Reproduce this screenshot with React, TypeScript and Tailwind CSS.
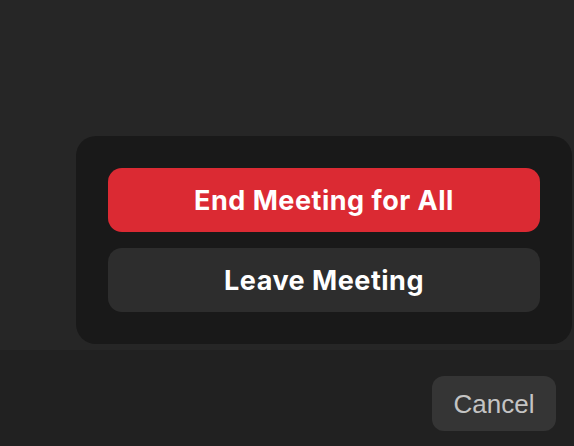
export default function App() {
  return (
    <div className="w-[574px] h-[446px] flex flex-col bg-[#212121]" style={{ fontFamily: "Inter, 'Liberation Sans', sans-serif" }}>
      <div className="h-[350px] bg-[#262626] flex justify-end items-end pr-[2px] pb-[6px]">
        <div className="w-[496px] rounded-[20px] bg-[#191919] p-8 flex flex-col gap-4">
          <button className="h-16 rounded-[14px] bg-[#db2a33] text-white text-[27px] tracking-[0.5px] font-bold flex items-center justify-center pt-[3px]">
            End Meeting for All
          </button>
          <button className="h-16 rounded-[14px] bg-[#2d2d2d] text-white text-[27px] tracking-[0.5px] font-bold flex items-center justify-center pt-[3px]">
            Leave Meeting
          </button>
        </div>
      </div>
      <div className="flex-1 flex justify-end items-start pt-[26px] pr-[18px]">
        <button
          className="w-[124px] h-[55px] rounded-[12px] bg-[#353535] text-[#c4c4c4] text-[26px] flex items-center justify-center pt-[2px]"
          style={{ fontFamily: "'Liberation Sans', Arial, sans-serif" }}
        >
          Cancel
        </button>
      </div>
    </div>
  );
}
